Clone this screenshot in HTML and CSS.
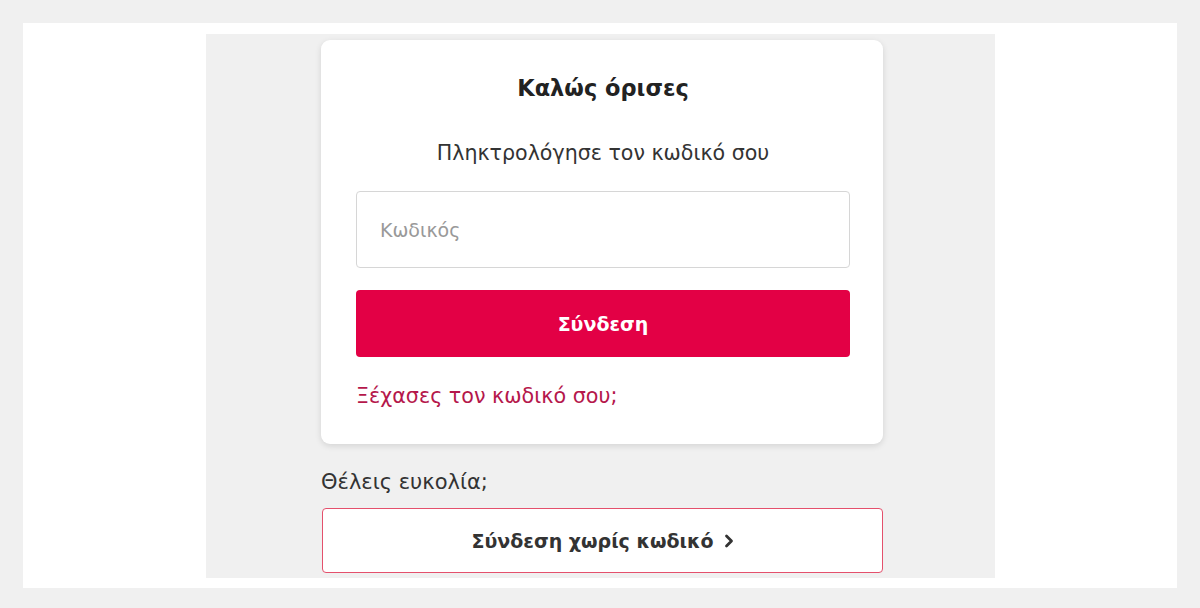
FILE: index.html
```html
<!DOCTYPE html>
<html lang="el">
  <head>
    <title>Σύνδεση</title>
    <meta charset="utf-8">
    <link rel="stylesheet" href="styles.css">
  </head>
  <body>
    <div class="frame">
      <div class="page">
        <div class="column">
          <div class="card">
            <h1 class="title">Καλώς όρισες</h1>
            <p class="subtitle">Πληκτρολόγησε τον κωδικό σου</p>
            <input class="field" type="password" placeholder="Κωδικός">
            <button class="btn-primary" type="button">Σύνδεση</button>
            <a class="forgot" href="#">Ξέχασες τον κωδικό σου;</a>
          </div>

          <p class="ease">Θέλεις ευκολία;</p>
          <button class="btn-outline" type="button">
            Σύνδεση χωρίς κωδικό
            <svg class="chev" width="10" height="14" viewBox="0 0 10 14"><path d="M2.5 2 L7.5 7 L2.5 12" fill="none" stroke="#333" stroke-width="2.8" stroke-linecap="round" stroke-linejoin="round"/></svg>
          </button>
        </div>
      </div>
    </div>
  </body>
</html>
```

FILE: styles.css
```css
html, body {
  height: 100%;
}
body {
  margin: 0;
  padding: 23px;
  box-sizing: border-box;
  background: #f0f0f0;
  font-family: "DejaVu Sans", "Open Sans", sans-serif;
  color: #333;
}

.frame {
  background: #fff;
  height: 565px;
  padding: 11px 0 10px 183px;
  box-sizing: border-box;
}

.page {
  width: 789px;
  height: 544px;
  background: #f0f0f0;
  overflow: hidden;
}

.column {
  width: 562px;
  margin-left: 115px;
  padding-top: 6px;
}

.card {
  background: #fff;
  border-radius: 9px;
  box-shadow: 0 2px 6px rgba(0,0,0,0.12);
  padding: 32px 33px 34px 35px;
  display: flex;
  flex-direction: column;
}

.title {
  margin: 0;
  text-align: center;
  font-size: 22.5px;
  font-weight: 700;
  line-height: 32px;
  color: #222;
}

.subtitle {
  margin: 34px 0 0;
  text-align: center;
  font-size: 20.6px;
  line-height: 30px;
  color: #333;
}

.field {
  margin-top: 23px;
  height: 77px;
  box-sizing: border-box;
  border: 1px solid #d6d6d6;
  border-radius: 4px;
  padding: 0 23px;
  font-family: inherit;
  font-size: 19px;
  color: #333;
}
.field::placeholder {
  color: #999;
}

.btn-primary {
  margin-top: 22px;
  height: 67px;
  border: 0;
  border-radius: 4px;
  background: #e30045;
  color: #fff;
  font-family: inherit;
  font-size: 19px;
  font-weight: 700;
}

.forgot {
  margin-top: 25px;
  color: #b5174b;
  font-size: 20.7px;
  line-height: 28px;
  text-decoration: none;
}

.ease {
  margin: 23px 0 0;
  font-size: 21px;
  line-height: 30px;
  color: #333;
}

.btn-outline {
  margin: 11px 0 0 1px;
  width: 561px;
  height: 65px;
  background: #fff;
  border: 1px solid #e4506c;
  border-radius: 4px;
  font-family: inherit;
  font-size: 19px;
  font-weight: 700;
  color: #333;
  display: flex;
  align-items: center;
  justify-content: center;
  gap: 10px;
}
```
